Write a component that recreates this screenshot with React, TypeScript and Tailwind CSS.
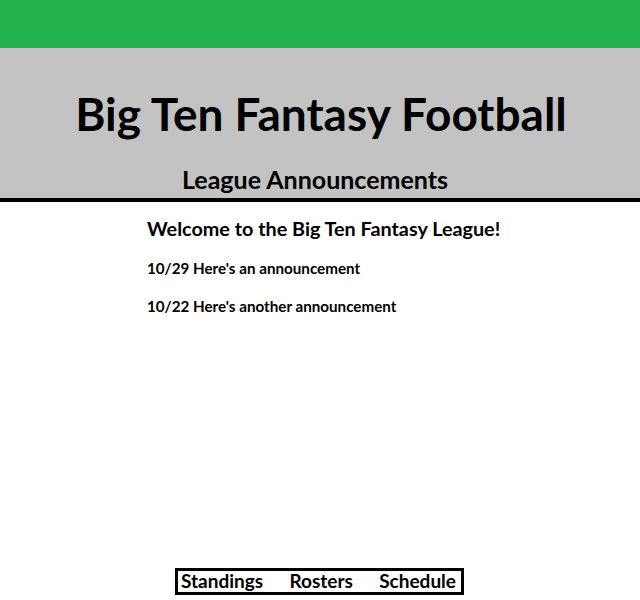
const App = () => {
    return (
        <div className="min-h-[600px] bg-white flex flex-col font-['Lato','Open_Sans',sans-serif] text-black">
            <div className="h-12 bg-[#22b14c]" />
            <div className="h-[154px] bg-[#c3c3c3] flex flex-col items-center border-b-4 border-black">
                <h1 className="mt-[41px] ml-[2px] text-[46px] leading-[50px] font-bold">Big Ten Fantasy Football</h1>
                <h2 className="mt-[26px] ml-[-10px] text-[25px] leading-[28px] font-bold">League Announcements</h2>
            </div>
            <div className="pl-[147px] pt-[14px]">
                <p className="text-[19.8px] leading-[24px] font-bold">Welcome to the Big Ten Fantasy League!</p>
                <p className="mt-[19px] text-[15.2px] leading-[18px] font-bold">10/29 Here's an announcement</p>
                <p className="mt-[20px] text-[15.2px] leading-[18px] font-bold">10/22 Here's another announcement</p>
            </div>
            <div className="flex-1" />
            <div className="flex justify-center pb-[5px]">
                <nav className="ml-[-1px] w-[289px] h-[27px] border-[3px] border-black flex items-center justify-between pl-[3px] pr-[5px] text-[19px] font-bold">
                    <span>Standings</span>
                    <span>Rosters</span>
                    <span>Schedule</span>
                </nav>
            </div>
        </div>
    );
};

export default App;
